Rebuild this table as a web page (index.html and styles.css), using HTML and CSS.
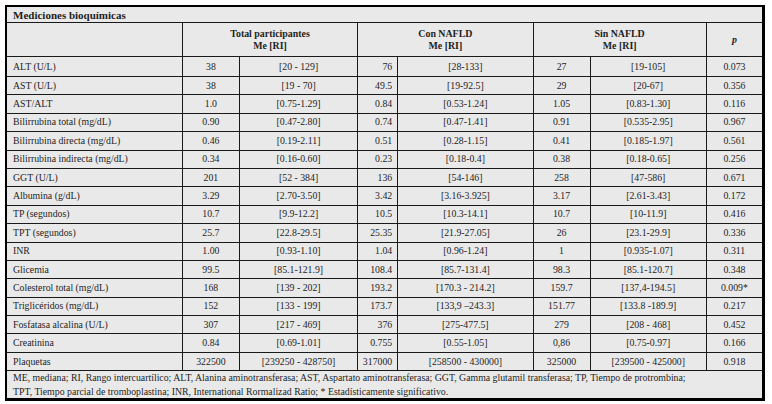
FILE: index.html
```html
<!DOCTYPE html>
<html lang="es">
<head>
<meta charset="utf-8">
<title>Mediciones bioquímicas</title>
<link rel="stylesheet" href="styles.css">
</head>
<body>
<table class="data">
  <colgroup>
    <col class="c-label">
    <col class="c-tme">
    <col class="c-tri">
    <col class="c-cme">
    <col class="c-cri">
    <col class="c-sme">
    <col class="c-sri">
    <col class="c-p">
  </colgroup>
  <tbody>
    <tr class="r-title"><td colspan="8" class="title">Mediciones bioquímicas</td></tr>
    <tr class="r-head">
      <td></td>
      <td colspan="2" class="head">Total participantes<br>Me [RI]</td>
      <td colspan="2" class="head">Con NAFLD<br>Me [RI]</td>
      <td colspan="2" class="head">Sin NAFLD<br>Me [RI]</td>
      <td class="head pval">p</td>
    </tr>
    <tr class="r-first"><td class="lbl">ALT (U/L)</td><td>38</td><td>[20 - 129]</td><td class="cme">76</td><td>[28-133]</td><td>27</td><td>[19-105]</td><td>0.073</td></tr>
    <tr><td class="lbl">AST (U/L)</td><td>38</td><td>[19 - 70]</td><td class="cme">49.5</td><td>[19-92.5]</td><td>29</td><td>[20-67]</td><td>0.356</td></tr>
    <tr><td class="lbl">AST/ALT</td><td>1.0</td><td>[0.75-1.29]</td><td class="cme">0.84</td><td>[0.53-1.24]</td><td>1.05</td><td>[0.83-1.30]</td><td>0.116</td></tr>
    <tr><td class="lbl">Bilirrubina total (mg/dL)</td><td>0.90</td><td>[0.47-2.80]</td><td class="cme">0.74</td><td>[0.47-1.41]</td><td>0.91</td><td>[0.535-2.95]</td><td>0.967</td></tr>
    <tr><td class="lbl">Bilirrubina directa (mg/dL)</td><td>0.46</td><td>[0.19-2.11]</td><td class="cme">0.51</td><td>[0.28-1.15]</td><td>0.41</td><td>[0.185-1.97]</td><td>0.561</td></tr>
    <tr><td class="lbl">Bilirrubina indirecta (mg/dL)</td><td>0.34</td><td>[0.16-0.60]</td><td class="cme">0.23</td><td>[0.18-0.4]</td><td>0.38</td><td>[0.18-0.65]</td><td>0.256</td></tr>
    <tr><td class="lbl">GGT (U/L)</td><td>201</td><td>[52 - 384]</td><td class="cme">136</td><td>[54-146]</td><td>258</td><td>[47-586]</td><td>0.671</td></tr>
    <tr><td class="lbl">Albumina (g/dL)</td><td>3.29</td><td>[2.70-3.50]</td><td class="cme">3.42</td><td>[3.16-3.925]</td><td>3.17</td><td>[2.61-3.43]</td><td>0.172</td></tr>
    <tr><td class="lbl">TP (segundos)</td><td>10.7</td><td>[9.9-12.2]</td><td class="cme">10.5</td><td>[10.3-14.1]</td><td>10.7</td><td>[10-11.9]</td><td>0.416</td></tr>
    <tr><td class="lbl">TPT (segundos)</td><td>25.7</td><td>[22.8-29.5]</td><td class="cme">25.35</td><td>[21.9-27.05]</td><td>26</td><td>[23.1-29.9]</td><td>0.336</td></tr>
    <tr><td class="lbl">INR</td><td>1.00</td><td>[0.93-1.10]</td><td class="cme">1.04</td><td>[0.96-1.24]</td><td>1</td><td>[0.935-1.07]</td><td>0.311</td></tr>
    <tr><td class="lbl">Glicemia</td><td>99.5</td><td>[85.1-121.9]</td><td class="cme">108.4</td><td>[85.7-131.4]</td><td>98.3</td><td>[85.1-120.7]</td><td>0.348</td></tr>
    <tr><td class="lbl">Colesterol total (mg/dL)</td><td>168</td><td>[139 - 202]</td><td class="cme">193.2</td><td>[170.3 - 214.2]</td><td>159.7</td><td>[137,4-194.5]</td><td>0.009*</td></tr>
    <tr><td class="lbl">Triglicéridos (mg/dL)</td><td>152</td><td>[133 - 199]</td><td class="cme">173.7</td><td>[133,9 –243.3]</td><td>151.77</td><td>[133.8 -189.9]</td><td>0.217</td></tr>
    <tr><td class="lbl">Fosfatasa alcalina (U/L)</td><td>307</td><td>[217 - 469]</td><td class="cme">376</td><td>[275-477.5]</td><td>279</td><td>[208 - 468]</td><td>0.452</td></tr>
    <tr><td class="lbl">Creatinina</td><td>0.84</td><td>[0.69-1.01]</td><td class="cme">0.755</td><td>[0.55-1.05]</td><td>0,86</td><td>[0.75-0.97]</td><td>0.166</td></tr>
    <tr><td class="lbl">Plaquetas</td><td>322500</td><td>[239250 - 428750]</td><td class="cme">317000</td><td>[258500 - 430000]</td><td>325000</td><td>[239500 - 425000]</td><td>0.918</td></tr>
    <tr class="r-note"><td colspan="8" class="note">ME, mediana; RI, Rango intercuartílico; ALT, Alanina aminotransferasa; AST, Aspartato aminotransferasa; GGT, Gamma glutamil transferasa; TP, Tiempo de protrombina;<br>TPT, Tiempo parcial de tromboplastina; INR, International Rormalizad Ratio; * Estadísticamente significativo.</td></tr>
  </tbody>
</table>
</body>
</html>
```

FILE: styles.css
```css
html, body {
  margin: 0;
  padding: 0;
  background: #ffffff;
}

body {
  padding: 5px 0 0 5px;
  font-family: "Liberation Serif", "Times New Roman", serif;
  font-size: 9.8px;
  color: #1e1e1e;
}

.data {
  border-collapse: collapse;
  table-layout: fixed;
  width: 760px;
  background: #e9e9e9;
  border: 2px solid #000;
  border-right-width: 3px;
  border-bottom-width: 3px;
}

.c-label { width: 176px; }
.c-tme { width: 57px; }
.c-tri { width: 118px; }
.c-cme { width: 40px; }
.c-cri { width: 135px; }
.c-sme { width: 57px; }
.c-sri { width: 116px; }
.c-p { width: 57px; }

.data td {
  border: 1px solid #1a1a1a;
  padding: 0 2px;
  text-align: center;
  vertical-align: middle;
  line-height: 12px;
  white-space: nowrap;
  height: 17.4px;
}

.data td.lbl {
  text-align: left;
  padding-left: 6px;
}

.data td.cme {
  text-align: right;
  padding-left: 0;
  padding-right: 5px;
}

.r-title td.title {
  height: 15px;
  text-align: left;
  padding-left: 6px;
  font-size: 11px;
  font-weight: bold;
}

.r-head td {
  height: 33px;
  font-size: 9.9px;
}

.head {
  font-weight: bold;
}

.pval {
  font-style: italic;
}

.r-first td {
  height: 19px;
}

.r-note td.note {
  height: 26px;
  text-align: left;
  padding-left: 6px;
  line-height: 13.5px;
  white-space: normal;
}
```
